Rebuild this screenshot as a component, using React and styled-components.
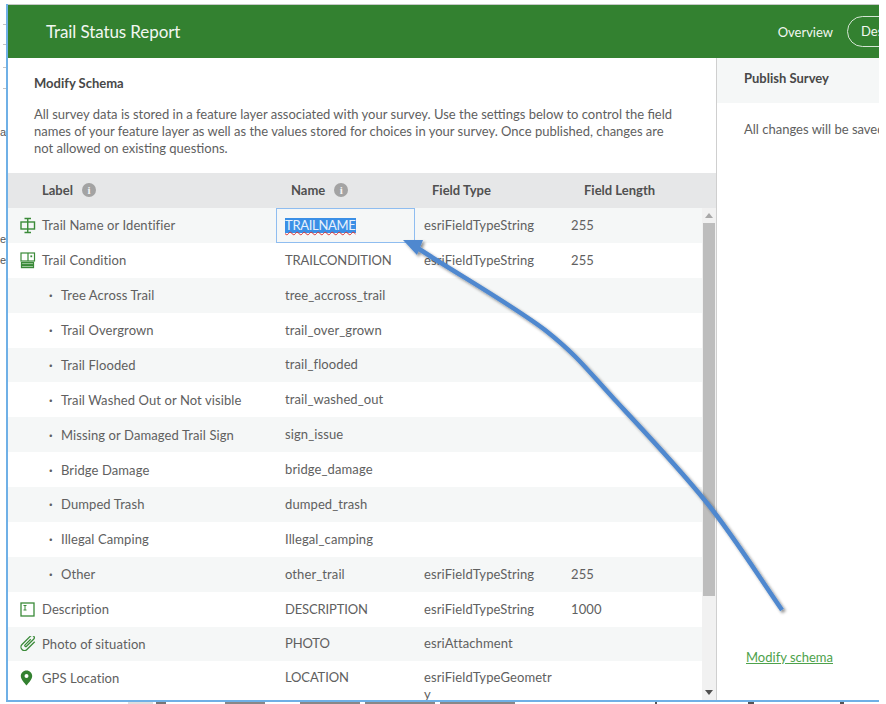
import React from "react";
import styled, { createGlobalStyle } from "styled-components";

const Global = createGlobalStyle`
  html, body { margin: 0; padding: 0; background: #fff; }
  body { font-family: Lato, "Open Sans", sans-serif; color: #4a4a4a; }
`;

const Page = styled.div`
  position: relative;
  width: 886px;
  height: 704px;
  overflow: hidden;
  padding: 4px 7px 0 6px;
  box-sizing: border-box;
`;

const Win = styled.div`
  height: 698px;
  border-left: 2px solid #6fb0e6;
  border-bottom: 2px solid #6fb0e6;
  box-sizing: border-box;
  display: flex;
  flex-direction: column;
  overflow: hidden;
`;

const TopBar = styled.header`
  flex: none;
  height: 54px;
  box-sizing: border-box;
  background: #338130;
  border-top: 1px solid #c6c9c6;
  display: flex;
  align-items: center;
  padding-left: 38px;
  color: #f2f7f1;
`;

const Title = styled.div`
  font-size: 17px;
  letter-spacing: -0.1px;
  flex: 1;
`;

const NavLink = styled.div`
  font-size: 13px;
  margin-right: 14px;
`;

const Pill = styled.div`
  flex: none;
  width: 100px;
  margin-right: -68px;
  height: 31px;
  box-sizing: border-box;
  border: 1px solid #d6e6d5;
  border-radius: 16px;
  font-size: 13px;
  line-height: 29px;
  padding-left: 13px;
  white-space: nowrap;
`;

const Body = styled.div`
  flex: 1;
  display: flex;
  min-height: 0;
`;

const Left = styled.section`
  width: 708px;
  flex: none;
  display: flex;
  flex-direction: column;
  border-right: 1px solid #cfcfcf;
  min-height: 0;
`;

const Intro = styled.div`
  flex: none;
  height: 115px;
  box-sizing: border-box;
  padding: 17px 26px 0;
`;

const H = styled.div`
  font-size: 13px;
  font-weight: 700;
  color: #484848;
  line-height: 16px;
`;

const P = styled.p`
  margin: 15px 0 0;
  font-size: 13px;
  line-height: 17px;
  color: #5f5f5f;
  width: 650px;
`;

const cols = "268px 139px 147px 1fr";

const HeadRow = styled.div`
  flex: none;
  height: 35px;
  box-sizing: border-box;
  padding-bottom: 2px;
  background: #e6e7e8;
  display: grid;
  grid-template-columns: ${cols};
  align-items: center;
  font-size: 13px;
  font-weight: 700;
  color: #505050;
`;

const HeadCell = styled.div`
  display: flex;
  align-items: center;
  gap: 9px;
  padding-left: ${p => p.$pad}px;
`;

const Info = styled.span`
  display: inline-block;
  width: 14px;
  height: 14px;
  border-radius: 50%;
  background: #a3a3a3;
  color: #f4f4f4;
  font: 700 11px/14px "Liberation Serif", serif;
  text-align: center;
`;

const Scroller = styled.div`
  flex: 1;
  display: flex;
  min-height: 0;
`;

const Rows = styled.div`
  flex: 1;
  min-width: 0;
  overflow: hidden;
`;

const Row = styled.div`
  height: 34.88px;
  box-sizing: border-box;
  display: grid;
  grid-template-columns: ${cols};
  align-items: ${p => (p.$wrap ? "start" : "center")};
  padding-top: ${p => (p.$wrap ? 8 : 0)}px;
  font-size: 13px;
  letter-spacing: 0.1px;
  color: #606060;
  background: ${p => (p.$odd ? "#f5f7f7" : "#fff")};
`;

const LabelCell = styled.div`
  display: flex;
  align-items: center;
  padding-left: ${p => (p.$child ? 53 : 12)}px;
  position: relative;
`;

const IconSlot = styled.span`
  width: 22px;
  height: 17px;
  flex: none;
  display: flex;
  align-items: center;
  color: #3a8a38;
`;

const Dot = styled.span`
  position: absolute;
  left: 41px;
  font-weight: 700;
`;

const Cell = styled.div`
  padding-left: 9px;
  line-height: 17px;
  white-space: nowrap;
  letter-spacing: ${p => (p.$caps ? "-0.15px" : "inherit")};
`;

const TypeCell = styled.div`
  padding-left: 9px;
  line-height: 17px;
  width: 130px;
  word-break: break-all;
`;

const FocusCell = styled.div`
  height: 100%;
  box-sizing: border-box;
  border: 1px solid #8fbdf0;
  padding-left: 8px;
  display: flex;
  align-items: center;
  letter-spacing: -0.3px;
`;

const Selected = styled.span`
  background: #3a8fe6;
  color: #e8f2fc;
  text-decoration: underline wavy #d33;
  text-decoration-thickness: 1px;
  text-underline-offset: 1px;
  line-height: 15px;
`;

const ScrollBar = styled.div`
  width: 14px;
  flex: none;
  background: #f1f1f1;
  display: flex;
  flex-direction: column;
  align-items: center;
`;

const Arrow = styled.div`
  flex: none;
  height: 15px;
  width: 100%;
  display: flex;
  align-items: center;
  justify-content: center;
`;

const Thumb = styled.div`
  width: 12px;
  height: 373px;
  background: #bdbdbd;
`;

const Spacer = styled.div`
  flex: 1;
`;

const Right = styled.aside`
  flex: 1;
  min-width: 0;
  display: flex;
  flex-direction: column;
`;

const PubHead = styled.div`
  flex: none;
  height: 45px;
  background: #f5f7f7;
  padding: 12px 0 0 27px;
  box-sizing: border-box;
  font-size: 13px;
  font-weight: 700;
  color: #484848;
`;

const PubText = styled.div`
  padding: 18px 0 0 27px;
  font-size: 13px;
  color: #606060;
  white-space: nowrap;
  flex: 1;
`;

const Modify = styled.a`
  padding: 0 0 35px 29px;
  font-size: 13px;
  color: #4ea24b;
  text-decoration: underline;
`;

const Gutter = styled.span`
  position: absolute;
  left: 0;
  top: ${p => p.$top}px;
  width: 6px;
  overflow: hidden;
  font: 11px "Liberation Sans", sans-serif;
  color: #555;
  direction: rtl;
`;

const Tick = styled.i`
  position: absolute;
  left: 3px;
  top: ${p => p.$top}px;
  width: 3px;
  height: 1px;
  background: #c4c4c4;
`;

const Behind = styled.i`
  position: absolute;
  top: 702px;
  height: 2px;
  left: ${p => p.$left}px;
  width: ${p => p.$w}px;
  background: ${p => p.$c};
`;

const Overlay = styled.svg`
  position: absolute;
  left: 0;
  top: 0;
  pointer-events: none;
`;

const IconField = () => (
  <svg width="16" height="17" viewBox="0 0 16 17" fill="none" stroke="currentColor" strokeWidth="1.4">
    <rect x="1" y="5" width="13.5" height="7" />
    <path d="M7.750 1.500v14M4.500 1.500h6.500M4.500 15.500h6.500" />
  </svg>
);
const IconGroup = () => (
  <svg width="16" height="17" viewBox="0 0 16 17" fill="none" stroke="currentColor" strokeWidth="1.2">
    <rect x="1" y="1" width="13.500" height="8" />
    <path d="M8 1v8" />
    <rect x="10.400" y="3.400" width="1.800" height="1.800" fill="currentColor" stroke="none" />
    <rect x="1.500" y="10.500" width="12" height="2.200" fill="#9cc79b" />
    <rect x="1.500" y="13.400" width="12" height="2.200" fill="#9cc79b" />
  </svg>
);
const IconText = () => (
  <svg width="15" height="15" viewBox="0 0 15 15" fill="none" stroke="currentColor" strokeWidth="1.300">
    <rect x="1" y="1" width="13" height="13" />
    <path d="M3.500 3.500h3M5 3.500v4.500M3.500 8h3" strokeWidth="1" />
  </svg>
);
const IconClip = () => (
  <svg width="16" height="15" viewBox="0 0 16 15" fill="none" stroke="currentColor" strokeWidth="1.250">
    <g transform="rotate(-45 8 7.500)">
      <path d="M14 11H3a3.500 3.500 0 0 1 0-7H15a2.200 2.200 0 0 1 0 4.400H5a1 1 0 0 1 0-2H13" />
    </g>
  </svg>
);
const IconPin = () => (
  <svg width="13" height="16" viewBox="0 0 13 16">
    <path fill="#338130" fillRule="evenodd" d="M6.500.5C3.200.5.800 3 .800 6c0 3.600 3.500 6.600 5.700 9.500C8.700 12.600 12.200 9.600 12.200 6 12.200 3 9.800.5 6.500.5Zm0 3.600a2 2 0 1 1 0 4 2 2 0 0 1 0-4Z" />
  </svg>
);

const data = [
  { label: "Trail Name or Identifier", icon: <IconField />, type: "esriFieldTypeString", len: "255", focus: true, name: "TRAILNAME" },
  { label: "Trail Condition", icon: <IconGroup />, name: "TRAILCONDITION", caps: true, type: "esriFieldTypeString", len: "255" },
  { label: "Tree Across Trail", child: true, name: "tree_accross_trail" },
  { label: "Trail Overgrown", child: true, name: "trail_over_grown" },
  { label: "Trail Flooded", child: true, name: "trail_flooded" },
  { label: "Trail Washed Out or Not visible", child: true, name: "trail_washed_out" },
  { label: "Missing or Damaged Trail Sign", child: true, name: "sign_issue" },
  { label: "Bridge Damage", child: true, name: "bridge_damage" },
  { label: "Dumped Trash", child: true, name: "dumped_trash" },
  { label: "Illegal Camping", child: true, name: "Illegal_camping" },
  { label: "Other", child: true, name: "other_trail", type: "esriFieldTypeString", len: "255" },
  { label: "Description", icon: <IconText />, name: "DESCRIPTION", caps: true, type: "esriFieldTypeString", len: "1000" },
  { label: "Photo of situation", icon: <IconClip />, name: "PHOTO", caps: true, type: "esriAttachment" },
  { label: "GPS Location", icon: <IconPin />, name: "LOCATION", caps: true, type: "esriFieldTypeGeometry", wrap: true },
];

const behind = [
  [128, 25, "#dedede"], [156, 10, "#777"], [225, 40, "#888"], [300, 60, "#888"],
  [365, 70, "#888"], [440, 75, "#888"], [655, 2, "#555"], [748, 6, "#555"], [840, 4, "#555"],
];

export default function App() {
  return (
    <Page>
      <Global />
      <Gutter $top={126}>a</Gutter>
      <Gutter $top={233}>e</Gutter>
      <Gutter $top={254}>e</Gutter>
      {[24, 44, 67, 88].map(t => <Tick key={t} $top={t} />)}
      {behind.map(([l, w, c]) => <Behind key={l} $left={l} $w={w} $c={c} />)}
      <Win>
        <TopBar>
          <Title>Trail Status Report</Title>
          <NavLink>Overview</NavLink>
          <Pill>Design</Pill>
        </TopBar>
        <Body>
          <Left>
            <Intro>
              <H>Modify Schema</H>
              <P>
                All survey data is stored in a feature layer associated with your survey. Use the settings below to control the field names of your feature layer as well as the values stored for choices in your survey. Once published, changes are not allowed on existing questions.
              </P>
            </Intro>
            <HeadRow>
              <HeadCell $pad={34}>Label <Info>i</Info></HeadCell>
              <HeadCell $pad={15}>Name <Info>i</Info></HeadCell>
              <HeadCell $pad={17}>Field Type</HeadCell>
              <HeadCell $pad={22}>Field Length</HeadCell>
            </HeadRow>
            <Scroller>
              <Rows>
                {data.map((r, i) => (
                  <Row key={r.name} $odd={i % 2 === 0} $wrap={r.wrap}>
                    <LabelCell $child={r.child}>
                      {r.child ? <Dot>·</Dot> : <IconSlot>{r.icon}</IconSlot>}
                      {r.label}
                    </LabelCell>
                    {r.focus ? (
                      <FocusCell><Selected>{r.name}</Selected></FocusCell>
                    ) : (
                      <Cell $caps={r.caps}>{r.name}</Cell>
                    )}
                    <TypeCell>{r.type}</TypeCell>
                    <Cell>{r.len}</Cell>
                  </Row>
                ))}
              </Rows>
              <ScrollBar>
                <Arrow>
                  <svg width="8" height="5" viewBox="0 0 8 5"><path d="M4 0 8 5H0Z" fill="#a8a8a8" /></svg>
                </Arrow>
                <Thumb />
                <Spacer />
                <Arrow>
                  <svg width="8" height="5" viewBox="0 0 8 5"><path d="M0 0H8L4 5Z" fill="#505050" /></svg>
                </Arrow>
              </ScrollBar>
            </Scroller>
          </Left>
          <Right>
            <PubHead>Publish Survey</PubHead>
            <PubText>All changes will be saved</PubText>
            <Modify>Modify schema</Modify>
          </Right>
        </Body>
      </Win>
      <Overlay width="886" height="704" viewBox="0 0 886 704">
        <defs>
          <filter id="sh" x="-10%" y="-10%" width="120%" height="120%">
            <feDropShadow dx="2" dy="2" stdDeviation="1.6" floodColor="#000" floodOpacity="0.45" />
          </filter>
        </defs>
        <g filter="url(#sh)">
          <path d="M782 610C757 574 735 538 707 503C679 468 642 429 615 400C588 371 578 356 545 330C512 305 459 275 416 247" fill="none" stroke="#4f88cf" strokeWidth="4.500" />
          <path d="M403 240 L423 240 L417 255 Z" fill="#4f88cf" />
        </g>
      </Overlay>
    </Page>
  );
}
